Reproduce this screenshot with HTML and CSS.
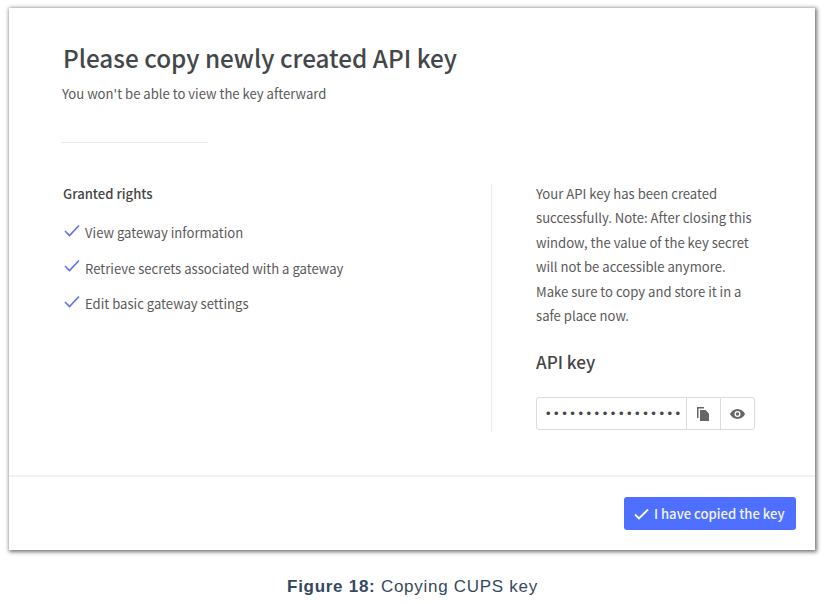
FILE: index.html
```html
<!DOCTYPE html>
<html lang="en">
<head>
  <meta charset="UTF-8">
  <title>Copying CUPS key</title>
  <link rel="stylesheet" href="styles.css">
</head>
<body>
  <div class="dialog">
    <div class="dialog-body">
      <h1>Please copy newly created API key</h1>
      <p class="subtitle">You won't be able to view the key afterward</p>
      <div class="short-rule"></div>

      <div class="columns">
        <div class="rights">
          <h2>Granted rights</h2>
          <ul>
            <li>
              <svg class="check" width="16" height="13" viewBox="0 0 16 13"><path d="M1 7l4.5 4.5L15 1.5"/></svg>
              View gateway information
            </li>
            <li>
              <svg class="check" width="16" height="13" viewBox="0 0 16 13"><path d="M1 7l4.5 4.5L15 1.5"/></svg>
              Retrieve secrets associated with a gateway
            </li>
            <li>
              <svg class="check" width="16" height="13" viewBox="0 0 16 13"><path d="M1 7l4.5 4.5L15 1.5"/></svg>
              Edit basic gateway settings
            </li>
          </ul>
        </div>

        <div class="key-panel">
          <p class="note">Your API key has been created successfully. Note: After closing this window, the value of the key secret will not be accessible anymore. Make sure to copy and store it in a safe place now.</p>
          <h3>API key</h3>
          <div class="key-field">
            <span class="key-dots">•••••••••••••••••</span>
            <span class="key-btn">
              <svg width="13" height="14" viewBox="0 0 13 14"><path d="M0 0h7v1.5H1.500V11H0z"/><path d="M3 3h5.500L12 6.500V14H3z"/></svg>
            </span>
            <span class="key-btn">
              <svg width="15" height="10" viewBox="0 0 15 10"><path fill-rule="evenodd" d="M7.500 0C11 0 13.800 2.200 15 5c-1.200 2.800-4 5-7.500 5S1.200 7.800 0 5C1.200 2.200 4 0 7.500 0zm0 2a3 3 0 1 0 0 6 3 3 0 0 0 0-6z"/><circle cx="7.500" cy="5" r="1.700"/></svg>
            </span>
          </div>
        </div>
      </div>
    </div>

    <div class="dialog-footer">
      <button class="confirm">
        <svg width="15" height="12" viewBox="0 0 15 12"><path d="M1 6.500l4 4L14 1.500"/></svg>
        I have copied the key
      </button>
    </div>
  </div>

  <p class="caption"><b>Figure 18:</b> Copying CUPS key</p>
</body>
</html>
```

FILE: styles.css
```css
body {
  margin: 0;
  background: #fff;
  font-family: "Noto Sans CJK SC", "Noto Sans", sans-serif;
  color: #5a5a5a;
}
.dialog {
  width: 806px;
  height: 542px;
  margin: 8px 0 0 9px;
  background: #fff;
  box-shadow: 1px 1px 4px 1px rgba(0, 0, 0, 0.55);
  display: flex;
  flex-direction: column;
}
.dialog-body {
  flex: 1;
  padding: 33px 60px 0 53px;
}
h1 {
  margin: 0;
  padding-left: 1px;
  font-size: 24.300px;
  line-height: 34px;
  font-weight: 500;
  color: #44474a;
}
.subtitle {
  margin: 9px 0 0;
  font-size: 13.100px;
  line-height: 20px;
}
.short-rule {
  width: 146px;
  height: 1px;
  margin-top: 38px;
  background: #e6e6e6;
}
.columns {
  display: flex;
  margin-top: 41px;
}
.rights {
  width: 429px;
  height: 248px;
  border-right: 1px solid #ececec;
}
h2 {
  margin: 0;
  padding-left: 1px;
  font-size: 13.100px;
  line-height: 20px;
  font-weight: 500;
  color: #444;
}
ul {
  list-style: none;
  margin: 11px 0 0;
  padding: 0;
}
li {
  display: flex;
  align-items: center;
  gap: 5px;
  height: 35.500px;
  font-size: 13.100px;
}
.check {
  margin: -5px 0 0 2px;
  fill: none;
  stroke: #5f6ff0;
  stroke-width: 1.600;
}
.key-panel {
  width: 219px;
  margin-left: 44px;
}
.note {
  margin: -2px 0 0;
  font-size: 13.100px;
  line-height: 24.400px;
}
h3 {
  margin: 21px 0 0;
  font-size: 17.100px;
  line-height: 26px;
  font-weight: 500;
  color: #444;
}
.key-field {
  display: flex;
  width: 219px;
  height: 33px;
  margin-top: 22px;
  border: 1px solid #dcdcdc;
  border-radius: 3px;
  box-sizing: border-box;
}
.key-dots {
  width: 149px;
  padding-left: 9px;
  box-sizing: border-box;
  overflow: hidden;
  font-family: "Liberation Sans", Arial, sans-serif;
  font-size: 13px;
  line-height: 31px;
  letter-spacing: 3.550px;
  color: #444;
  white-space: nowrap;
}
.key-btn {
  flex: 1;
  display: flex;
  align-items: center;
  justify-content: center;
  border-left: 1px solid #dcdcdc;
}
.key-btn svg {
  fill: #666;
}
.dialog-footer {
  height: 75px;
  box-sizing: border-box;
  border-top: 2px solid #f2f2f2;
  display: flex;
  justify-content: flex-end;
  align-items: flex-start;
  padding: 20px 19px 0 0;
}
.confirm {
  display: flex;
  align-items: center;
  gap: 5px;
  width: 172px;
  height: 33px;
  padding: 0 0 0 10px;
  border: none;
  border-radius: 3px;
  background: #4e6fff;
  color: #f2f4ff;
  font-family: inherit;
  font-size: 13.100px;
  font-weight: 500;
}
.confirm svg {
  fill: none;
  stroke: #fff;
  stroke-width: 1.800;
}
.caption {
  margin: 27px 0 0;
  padding-right: 5px;
  text-align: center;
  font-family: "Liberation Sans", Arial, sans-serif;
  font-size: 17px;
  letter-spacing: 0.720px;
  color: #34495e;
}
```
